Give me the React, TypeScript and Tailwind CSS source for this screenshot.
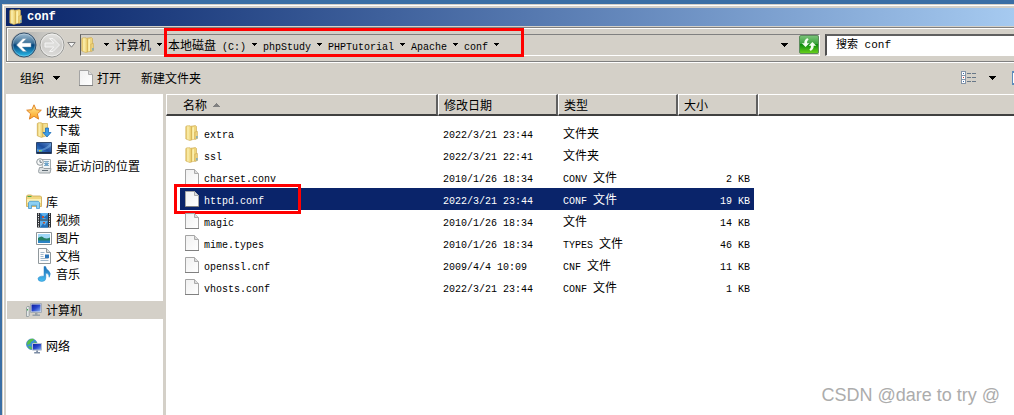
import React, { useState } from "react";

type IconProps = { className?: string };

interface IFile {
  name: string;
  date: string;
  type: string;
  size?: string;
}

interface IPlace {
  label: string;
  icon: React.FC<IconProps>;
}

const files: IFile[] = [
  { name: "extra", date: "2022/3/21 23:44", type: "文件夹" },
  { name: "ssl", date: "2022/3/21 22:41", type: "文件夹" },
  { name: "charset.conv", date: "2010/1/26 18:34", type: "CONV 文件", size: "2 KB" },
  { name: "httpd.conf", date: "2022/3/21 23:44", type: "CONF 文件", size: "19 KB" },
  { name: "magic", date: "2010/1/26 18:34", type: "文件", size: "14 KB" },
  { name: "mime.types", date: "2010/1/26 18:34", type: "TYPES 文件", size: "46 KB" },
  { name: "openssl.cnf", date: "2009/4/4 10:09", type: "CNF 文件", size: "11 KB" },
  { name: "vhosts.conf", date: "2022/3/21 23:44", type: "CONF 文件", size: "1 KB" },
];

const crumbs = ["计算机", "本地磁盘 (C:)", "phpStudy", "PHPTutorial", "Apache", "conf"];

// Latin runs are half as wide as a Chinese character
const Label = ({ text }: { text: string }) => (
  <span className="whitespace-pre text-[12px]">
    {text.split(/([\x20-\x7e]+)/).map((part, i) =>
      i % 2 === 1 ? (
        <span key={i} className="font-['Liberation_Mono',monospace] text-[10px] leading-none">
          {part}
        </span>
      ) : (
        part
      )
    )}
  </span>
);

/* Icons */
const Gradients = () => (
  <svg className="absolute h-0 w-0" aria-hidden="true">
    <defs>
      <linearGradient id="gold" x1="0" y1="0" x2="1" y2="0">
        <stop offset="0" stopColor="#e3bd55" />
        <stop offset="0.35" stopColor="#fbf0b0" />
        <stop offset="1" stopColor="#e8c760" />
      </linearGradient>
      <linearGradient id="paper" x1="0" y1="0" x2="1" y2="1">
        <stop offset="0" stopColor="#f0f0f0" />
        <stop offset="1" stopColor="#ffffff" />
      </linearGradient>
      <linearGradient id="screen" x1="0" y1="0" x2="1" y2="1">
        <stop offset="0" stopColor="#0c1c9c" />
        <stop offset="0.5" stopColor="#2846cc" />
        <stop offset="1" stopColor="#8cb4f4" />
      </linearGradient>
      <linearGradient id="desk" x1="0" y1="1" x2="1" y2="0">
        <stop offset="0" stopColor="#3c94e0" />
        <stop offset="0.5" stopColor="#1c4c9c" />
        <stop offset="1" stopColor="#5c8ccc" />
      </linearGradient>
      <linearGradient id="star" x1="0" y1="0" x2="0" y2="1">
        <stop offset="0" stopColor="#fff0a0" />
        <stop offset="1" stopColor="#fca01c" />
      </linearGradient>
      <linearGradient id="note" x1="0" y1="0" x2="0" y2="1">
        <stop offset="0" stopColor="#1c6cb4" />
        <stop offset="1" stopColor="#48c0f4" />
      </linearGradient>
      <linearGradient id="green" x1="0" y1="0" x2="0" y2="1">
        <stop offset="0" stopColor="#7cc47c" />
        <stop offset="0.45" stopColor="#3ca43c" />
        <stop offset="0.5" stopColor="#0c8c0c" />
        <stop offset="1" stopColor="#6cd41c" />
      </linearGradient>
      <linearGradient id="back" x1="0" y1="0" x2="0" y2="1">
        <stop offset="0" stopColor="#a4c0d4" />
        <stop offset="0.42" stopColor="#3c7098" />
        <stop offset="0.5" stopColor="#04447c" />
        <stop offset="1" stopColor="#2cc0f0" />
      </linearGradient>
      <linearGradient id="forward" x1="0" y1="0" x2="0" y2="1">
        <stop offset="0" stopColor="#e4e4e2" />
        <stop offset="0.5" stopColor="#cccbc8" />
        <stop offset="1" stopColor="#dededc" />
      </linearGradient>
    </defs>
  </svg>
);

const Arrow = ({ className = "" }: IconProps) => (
  <svg viewBox="0 0 5 3" className={`h-[3px] w-[5px] shrink-0 ${className}`} shapeRendering="crispEdges">
    <path d="M0 0h5v1H4v1H3v1H2V2H1V1H0z" fill="currentColor" />
  </svg>
);

const BigArrow = ({ className = "" }: IconProps) => (
  <svg viewBox="0 0 7 4" className={`h-1 w-[7px] shrink-0 ${className}`} shapeRendering="crispEdges">
    <path d="M0 0h7v1H6v1H5v1H4v1H3V3H2V2H1V1H0z" fill="currentColor" />
  </svg>
);

const FolderIcon = ({ className = "" }: IconProps) => (
  <svg viewBox="0 0 14 16" className={`h-4 w-[14px] shrink-0 ${className}`}>
    <path d="M6 1.2 10.5.6l1 1v12L6 15z" fill="#f0d67c" stroke="#c9a54b" strokeWidth=".6" />
    <path d="M7.3 2.4 9 2v12l-1.7.5z" fill="#fbf0b0" />
    <path d="m9.8 7 2.7-.6v7.1l-2.7 1z" fill="#ecd27c" stroke="#c9a54b" strokeWidth=".5" />
    <path d="M.8 1.5 2 .8h3.2l1.3 1.4v12.6L5 15.6.8 14z" fill="url(#gold)" stroke="#cfac50" strokeWidth=".6" />
    <path d="M11.4 11h1v2.6h-1z" fill="#4c9cdc" />
  </svg>
);

const PageIcon = ({ className = "" }: IconProps) => (
  <svg viewBox="0 0 14 16" className={`h-4 w-[14px] shrink-0 ${className}`}>
    <path d="M.5.5h9l4 4v11H.5z" fill="url(#paper)" stroke="#a4a4a4" />
    <path d="M9.5.5v4h4" fill="#dcdcdc" stroke="#acacac" />
    <path d="M0 15.5h14" stroke="#808080" />
  </svg>
);

const StarIcon = ({ className = "" }: IconProps) => (
  <svg viewBox="0 0 16 16" className={`size-4 ${className}`}>
    <path
      d="m8 .8 2.1 4.9 5.2.5-3.9 3.6 1.2 5.3L8 12.3l-4.6 2.8 1.2-5.3L.7 6.2l5.2-.5z"
      fill="url(#star)"
      stroke="#e08428"
      strokeLinejoin="round"
    />
  </svg>
);

const DownloadIcon = ({ className = "" }: IconProps) => (
  <svg viewBox="0 0 16 16" className={`size-4 ${className}`}>
    <path d="M5.5 1.5h6v12l-5 1.5z" fill="#f4e090" stroke="#d0ac50" strokeWidth=".7" />
    <path d="M1.3 1.5 2.5.8h3l1.3 1.4v12.6l-1.3.6-4.2-1.6z" fill="url(#gold)" stroke="#cfac50" strokeWidth=".7" />
    <path d="M9.5 6h3v4.5H15L11 15 7 10.5h2.5z" fill="#3c9ce8" stroke="#1c6cb8" strokeWidth=".8" />
  </svg>
);

const DesktopIcon = ({ className = "" }: IconProps) => (
  <svg viewBox="0 0 16 16" className={`size-4 ${className}`}>
    <path d="M.5 2.5h15v11H.5z" fill="url(#desk)" stroke="#30486c" />
    <path d="M1 12h14v1.5H1z" fill="#1c2c4c" />
    <path d="M1 9q6 2 14-6v3Q9 12 1 11z" fill="#8cc4f0" opacity=".45" />
    <path d="M3 10h1.5v1.5H3z" fill="#f0c020" />
    <path d="M4.5 10H6v1.5H4.5z" fill="#60d080" />
  </svg>
);

const RecentIcon = ({ className = "" }: IconProps) => (
  <svg viewBox="0 0 16 16" className={`size-4 ${className}`}>
    <path d="M5.5 1.5h9v9h-8z" fill="#f0f4f6" stroke="#a4acb0" />
    <path d="M8 3.5h5M8 5.5h5M8 7.5h5" stroke="#88aec4" />
    <path d="M9 4.5h3v3H9z" fill="#6ca4cc" />
    <path d="M3.5 9.5 2.5 13.5q0 1.5 1.5 1.5h10l1-4.5H8L7 9.5z" fill="#dce0e2" stroke="#98a0a4" />
    <path d="M6 12.5h6" stroke="#606c74" />
    <circle cx="4" cy="4" r="3.3" fill="#f6f8f8" stroke="#90989c" />
    <path d="M4 2v2.3h2" fill="none" stroke="#50606c" strokeWidth=".8" />
  </svg>
);

const LibraryIcon = ({ className = "" }: IconProps) => (
  <svg viewBox="0 0 16 16" className={`size-4 ${className}`}>
    <path d="M.5 2.2 1.5 1h4l1 1h8l1 1v9.5H.5z" fill="#f2d880" stroke="#cca850" strokeWidth=".8" />
    <path d="M1.5 2.5h4" stroke="#48a848" />
    <path d="M1 5h14v4H1z" fill="#fbf0b4" />
    <path d="M2.5 14.5v-6l1.2-1.2h8.6l1.2 1.2v6h-3v-3.2h-5v3.2z" fill="#8cd0f4" stroke="#4898cc" strokeWidth=".8" />
  </svg>
);

const VideoIcon = ({ className = "" }: IconProps) => (
  <svg viewBox="0 0 16 16" className={`size-4 ${className}`}>
    <path d="M1 1h14v14.5H1z" fill="#2c3034" />
    <path d="M4 1h8v6.6H4zM4 8.6h8v6.9H4z" fill="#5cb0ec" />
    <path d="m4 1 4 4 4-3v5.6L8 6 4 7.600zM4 15.500l3-4 2 2 3-4.900v6.900z" fill="#2470b8" />
    <path d="M6 4h2v2H6zM7 10h2v1.500H7z" fill="#c05430" />
    <path d="M2.5 1.500v14M13.500 1.500v14" stroke="#f4f4f4" strokeDasharray="1.2 1.2" />
  </svg>
);

const PictureIcon = ({ className = "" }: IconProps) => (
  <svg viewBox="0 0 16 16" className={`size-4 ${className}`}>
    <path d="M.5 2.5h15v12H.5z" fill="#fff" stroke="#8c9498" />
    <path d="M2 4h12v9H2z" fill="#a0d8f8" />
    <path d="M2 8q4-3 6 0 3 1 6-.5V11H2z" fill="#248064" />
    <path d="M2 10.5h12V13H2z" fill="#2c84c4" />
  </svg>
);

const DocumentIcon = ({ className = "" }: IconProps) => (
  <svg viewBox="0 0 16 16" className={`size-4 ${className}`}>
    <path d="M2.5.5h8l4 4v11h-12z" fill="#fcfcfc" stroke="#90989c" />
    <path d="M10.5.5v4h4" fill="#d8dcdc" stroke="#90989c" />
    <path d="M4.5 4.5h4M4.5 6.5h3M4.5 8.5h3M4.5 10.5h8M4.5 12.5h8" stroke="#a0b8cc" />
    <path d="M9 6.5h4V10H9z" fill="#2c74b8" />
  </svg>
);

const MusicIcon = ({ className = "" }: IconProps) => (
  <svg viewBox="0 0 16 16" className={`size-4 ${className}`}>
    <path
      d="M8 .5h1.6q.4 2.600 3 4.200 3 2.600.6 6.600.3-3.400-3.400-4.300V12q0 3.400-4 3.500-3.800-.2-3.800-2.800Q2.400 9.800 8 10.200z"
      fill="url(#note)"
      stroke="#2480c4"
      strokeWidth=".5"
    />
  </svg>
);

const ComputerIcon = ({ className = "" }: IconProps) => (
  <svg viewBox="0 0 16 16" className={`size-4 ${className}`}>
    <path d="M.5 5.5 1.2 4.500h2v9l-.7 1h-2z" fill="#e4e8e8" stroke="#8c9498" strokeWidth=".8" />
    <path d="M1.500 7v1.500" stroke="#38b048" />
    <path d="M4.5 1.5h11v9h-11z" fill="#d8dce0" stroke="#a4acb4" />
    <path d="M5.5 2.5h9v7h-9z" fill="url(#screen)" />
    <path d="M9 11h2.5v1.5H14V14H6.5v-1.5H9z" fill="#98a0a8" />
  </svg>
);

const NetworkIcon = ({ className = "" }: IconProps) => (
  <svg viewBox="0 0 16 16" className={`size-4 ${className}`}>
    <circle cx="5.8" cy="6.2" r="5.3" fill="#3c90dc" stroke="#2870b0" strokeWidth=".6" />
    <path d="M2 3q3-3 6-2-.5 2-2.500 2.500L4 6 1 7Q.8 4.600 2 3zM8.500 3l2 2-2 1zM2 8l3 .5 1 2-1 1Q2.500 10.500 2 8z" fill="#58c048" />
    <path d="M6.500 5.500h9v6.600h-9z" fill="url(#screen)" stroke="#b8c0cc" />
    <path d="M10.200 12.500h1.800V14h2v1.500H8.200V14h2z" fill="#7c8ca4" />
  </svg>
);

const RefreshIcon = ({ className = "" }: IconProps) => (
  <svg viewBox="0 0 20 19" className={`h-[19px] w-5 ${className}`}>
    <rect x=".5" y=".5" width="19" height="18" rx="1.5" fill="url(#green)" stroke="#5c8c5c" />
    <path
      d="M8.700 3.200Q5.300 4 5.300 8.200H2.800L6.600 12l3.700-3.800H8q-.2-2.700 1.600-3.800zM11.300 15.800q3.400-.8 3.400-5h2.500L13.400 7 9.700 10.800H12q.2 2.700-1.600 3.800z"
      fill="#f4fff0"
    />
  </svg>
);

const ListIcon = ({ className = "" }: IconProps) => (
  <svg viewBox="0 0 16 13" className={`h-[13px] w-4 ${className}`} shapeRendering="crispEdges">
    <path d="M0 0h5v13H0z" fill="#8494a8" />
    <path d="M1 1h3v3H1zM1 5h3v3H1zM1 9h3v3H1z" fill="#fff" />
    <path d="M2 2h1v1H2zM2 10h1v1H2z" fill="#3c6cac" />
    <path d="M2 6h1v1H2z" fill="#c83c3c" />
    <path d="M6 2.5h4M11 2.5h4M6 6.5h4M11 6.5h4M6 10.5h4M11 10.5h4" stroke="#687888" />
  </svg>
);

const NavArrow = ({ forward = false }: { forward?: boolean }) => (
  <svg viewBox="0 0 26 26" className="size-[26px]">
    <circle
      cx="13"
      cy="13"
      r="12"
      fill={forward ? "url(#forward)" : "url(#back)"}
      stroke={forward ? "#989894" : "#34506c"}
    />
    <circle cx="13" cy="13" r="11" fill="none" stroke="#fff" strokeOpacity={forward ? 0.5 : 0.25} />
    <path
      d={forward ? "M20.500 13 14 6.500h-3.500L14.800 11H6v4h8.800l-4.300 4.500H14z" : "M5.500 13 12 6.500h3.500L11.200 11H20v4h-8.800l4.300 4.500H12z"}
      fill={forward ? "#dededc" : "#fff"}
      stroke={forward ? "#f4f4f4" : "#7c9cb4"}
      strokeWidth={forward ? 1 : 0.5}
    />
  </svg>
);

/* Sidebar */
const groups: { head: IPlace; items: IPlace[] }[] = [
  {
    head: { label: "收藏夹", icon: StarIcon },
    items: [
      { label: "下载", icon: DownloadIcon },
      { label: "桌面", icon: DesktopIcon },
      { label: "最近访问的位置", icon: RecentIcon },
    ],
  },
  {
    head: { label: "库", icon: LibraryIcon },
    items: [
      { label: "视频", icon: VideoIcon },
      { label: "图片", icon: PictureIcon },
      { label: "文档", icon: DocumentIcon },
      { label: "音乐", icon: MusicIcon },
    ],
  },
  { head: { label: "计算机", icon: ComputerIcon }, items: [] },
  { head: { label: "网络", icon: NetworkIcon }, items: [] },
];

const Sidebar = () => (
  <nav className="flex w-[157px] shrink-0 flex-col gap-[18px] bg-white pt-[9px] pl-px">
    {groups.map(({ head, items }) => (
      <ul key={head.label}>
        <li>
          <a
            href="#"
            className={`flex h-[18px] items-center gap-1 pl-[19px] ${
              head.label === "计算机" ? "bg-[#d4d0c8]" : ""
            }`}
          >
            <head.icon />
            <Label text={head.label} />
          </a>
        </li>
        {items.map((item) => (
          <li key={item.label}>
            <a href="#" className="flex h-[18px] items-center gap-1 pl-[29px]">
              <item.icon />
              <Label text={item.label} />
            </a>
          </li>
        ))}
      </ul>
    ))}
  </nav>
);

const headCell =
  "h-[22px] border-t border-l border-t-white border-l-white border-b-2 border-b-[#404040] bg-[#d4d0c8] p-0 pl-[5px] text-left font-normal";

const FileTable = () => {
  const [selected, setSelected] = useState("httpd.conf");

  return (
    <table className="w-full table-fixed border-separate border-spacing-0">
      <colgroup>
        <col className="w-[14px]" />
        <col className="w-[258px]" />
        <col className="w-[120px]" />
        <col className="w-[120px]" />
        <col className="w-[76px]" />
        <col className="w-1" />
        <col />
      </colgroup>
      <thead>
        <tr>
          <th colSpan={2} className={`${headCell} border-r-2 border-r-[#606060]`}>
            <div className="flex items-center gap-1.5 pl-[11px]">
              <Label text="名称" />
              <BigArrow className="rotate-180 text-[#808080]" />
            </div>
          </th>
          <th className={`${headCell} border-r-2 border-r-[#606060]`}>
            <Label text="修改日期" />
          </th>
          <th className={`${headCell} border-r-2 border-r-[#606060]`}>
            <Label text="类型" />
          </th>
          <th colSpan={2} className={`${headCell} border-r-2 border-r-[#606060]`}>
            <Label text="大小" />
          </th>
          <th className={headCell} />
        </tr>
      </thead>
      <tbody>
        <tr className="h-1.5">
          <td colSpan={7} className="p-0" />
        </tr>
        {files.map((file) => {
          const cell = `h-[22px] p-0 ${file.name === selected ? "bg-[#0a246a] text-white" : ""}`;
          return (
            <tr key={file.name} onClick={() => setSelected(file.name)}>
              <td className="p-0" />
              <td className={`${cell} relative pl-[5px]`}>
                <div className="flex items-center gap-[5px]">
                  {file.size ? <PageIcon /> : <FolderIcon />}
                  <Label text={file.name} />
                </div>
                {file.name === "httpd.conf" && (
                  <div className="pointer-events-none absolute -top-1 -left-1.5 h-[30px] w-[127px] border-3 border-[#ff0000]" />
                )}
              </td>
              <td className={`${cell} pl-[5px]`}>
                <Label text={file.date} />
              </td>
              <td className={`${cell} pl-[5px]`}>
                <Label text={file.type} />
              </td>
              <td className={`${cell} pr-1 text-right`}>
                <Label text={file.size ?? ""} />
              </td>
              <td className="p-0" />
              <td className="p-0" />
            </tr>
          );
        })}
      </tbody>
    </table>
  );
};

const App = () => {
  return (
    <div className="relative flex min-h-screen flex-col overflow-hidden bg-[#3a6ea5] pt-1 pl-0.5 font-['Noto_Sans_CJK_SC',sans-serif] text-[12px] leading-[18px] text-black">
      <Gradients />
      <div className="flex flex-1 flex-col border-t border-l border-[#d4d0c8]">
        <div className="flex flex-1 flex-col border-t border-l border-white bg-[#d4d0c8] pt-0.5 pl-0.5">
          {/* Title bar */}
          <header className="flex h-[18px] items-center gap-1 bg-linear-to-r from-[#0a246a] to-[#a6caf0] pl-[3px] text-white">
            <FolderIcon />
            <h1 className="font-['Liberation_Mono',monospace] text-[12px] font-bold">conf</h1>
          </header>

          {/* Address bar */}
          <div className="relative mt-px flex h-[35px] items-center border-t border-b border-l border-[#808080] pl-1 shadow-[inset_1px_1px_0_#fff]">
            <div className="flex items-center gap-0.5">
              <div className="flex items-center gap-0.5 rounded-full bg-linear-to-r from-[#a8a8a4] to-[#dcdad6]">
                <button aria-label="后退">
                  <NavArrow />
                </button>
                <button aria-label="前进">
                  <NavArrow forward />
                </button>
              </div>
              <button aria-label="历史记录">
                <svg viewBox="0 0 9 6" className="h-1.5 w-[9px]">
                  <path d="M.8.5h7.400L4.500 5.200z" fill="#f4f4f4" stroke="#808080" />
                </svg>
              </button>
            </div>
            <div className="ml-1 flex h-[22px] min-w-0 flex-1 items-center border border-t-[#808080] border-r-white border-b-white border-l-[#606060]">
              <FolderIcon />
              <Arrow className="mr-1.5 ml-[9px]" />
              {crumbs.map((crumb) => (
                <div key={crumb} className="flex items-center gap-1.5 pr-1.5">
                  <a href="#">
                    <Label text={crumb} />
                  </a>
                  <Arrow />
                </div>
              ))}
              <button aria-label="以前的位置" className="ml-auto px-[11px]">
                <BigArrow />
              </button>
              <button aria-label="刷新">
                <RefreshIcon />
              </button>
            </div>
            <input
              type="text"
              aria-label="搜索 conf"
              placeholder="搜索 conf"
              className="ml-[5px] h-[22px] w-[189px] border-t-2 border-b border-l-2 border-t-[#606060] border-b-white border-l-[#505050] bg-white pl-[9px] font-['Liberation_Mono','Noto_Sans_CJK_SC',monospace] text-[11px] outline-none placeholder:text-black"
            />
            <div className="pointer-events-none absolute top-0 left-[157px] h-[29px] w-[360px] border-3 border-[#ff0000]" />
          </div>

          {/* Toolbar */}
          <div className="flex h-8 items-center border-t border-white pb-0.5 pl-[14px]">
            <button className="flex items-center gap-[9px]">
              <Label text="组织" />
              <BigArrow />
            </button>
            <button className="ml-[19px] flex items-center gap-1">
              <PageIcon />
              <Label text="打开" />
            </button>
            <button className="ml-5">
              <Label text="新建文件夹" />
            </button>
            <button aria-label="更改视图" className="mr-4 ml-auto flex items-center gap-3">
              <ListIcon />
              <BigArrow />
            </button>
            <button aria-label="预览窗格" className="h-[14px] w-0.5 border-y-2 border-l border-[#5c8cbc] bg-white" />
          </div>

          <div className="flex flex-1 gap-[3px]">
            <Sidebar />
            <main className="min-w-0 flex-1 bg-white">
              <FileTable />
            </main>
          </div>
        </div>
      </div>

      <p className="pointer-events-none absolute right-[14px] bottom-2 font-['Liberation_Sans',sans-serif] text-[18px] leading-6 text-[#acacac]">
        CSDN @dare to try @
      </p>
    </div>
  );
};

export default App;
